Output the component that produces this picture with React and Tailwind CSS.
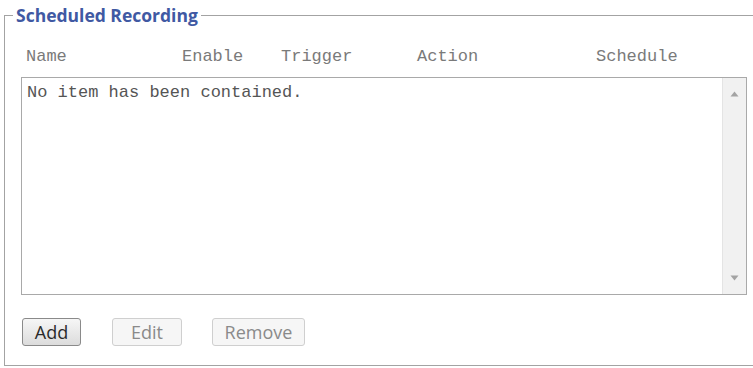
import React from "react";

const columns = [
  { header: "Name", width: "w-[156px]" },
  { header: "Enable", width: "w-[99px]" },
  { header: "Trigger", width: "w-[136px]" },
  { header: "Action", width: "w-[179px]" },
  { header: "Schedule", width: "flex-1" },
];

const App = () => {
  const items = [];

  return (
    <div className="w-[753px] h-[368px] bg-white overflow-hidden pt-[5px] pl-[4px]">
      <fieldset className="w-[760px] border border-[#a3a3a3] pb-[19px]">
        <legend className="ml-[8px] px-[3px] text-[17.5px] leading-[20px] font-bold text-[#4059a3] font-['Open_Sans',sans-serif]">
          Scheduled Recording
        </legend>

        <div className="pl-[16px]">
          <div className="flex mt-[22px] pl-[5px] text-[17px] leading-[20px] text-[#7a7a7a] font-['Liberation_Mono',monospace]">
            {columns.map((col) => (
              <div key={col.header} className={col.width}>
                {col.header}
              </div>
            ))}
          </div>

          <div className="mt-[10px] w-[726px] h-[218px] border border-[#a9a9a9] flex bg-white">
            <div className="flex-1 pl-[5px] pt-[5px] text-[17px] leading-[20px] text-[#555] font-['Liberation_Mono',monospace]">
              {items.length === 0 ? "No item has been contained." : null}
            </div>
            <div className="w-[24px] bg-[#f1f1f1] border-l border-[#e4e4e4] flex flex-col items-center justify-between py-[13px]">
              <svg width="9" height="6" viewBox="0 0 9 6">
                <path d="M4.5 0.5 L8.5 5.5 L0.5 5.5 Z" fill="#a3a3a3" />
              </svg>
              <svg width="9" height="6" viewBox="0 0 9 6">
                <path d="M0.5 0.5 L8.5 0.5 L4.5 5.5 Z" fill="#a3a3a3" />
              </svg>
            </div>
          </div>

          <div className="flex mt-[23px] pl-[1px] font-['Open_Sans',sans-serif] text-[18px] leading-[20px]">
            <button className="w-[59px] h-[28px] rounded-[3px] border border-[#8a8a8a] bg-gradient-to-b from-[#f6f6f6] to-[#dcdcdc] text-[#2a2a2a] font-medium">
              Add
            </button>
            <button className="ml-[31px] w-[70px] h-[28px] rounded-[3px] border border-[#cfcfcf] bg-[#f6f6f6] text-[#8a8a8a]">
              Edit
            </button>
            <button className="ml-[30px] w-[93px] h-[28px] rounded-[3px] border border-[#cfcfcf] bg-[#f6f6f6] text-[#8a8a8a]">
              Remove
            </button>
          </div>
        </div>
      </fieldset>
    </div>
  );
};

export default App;
